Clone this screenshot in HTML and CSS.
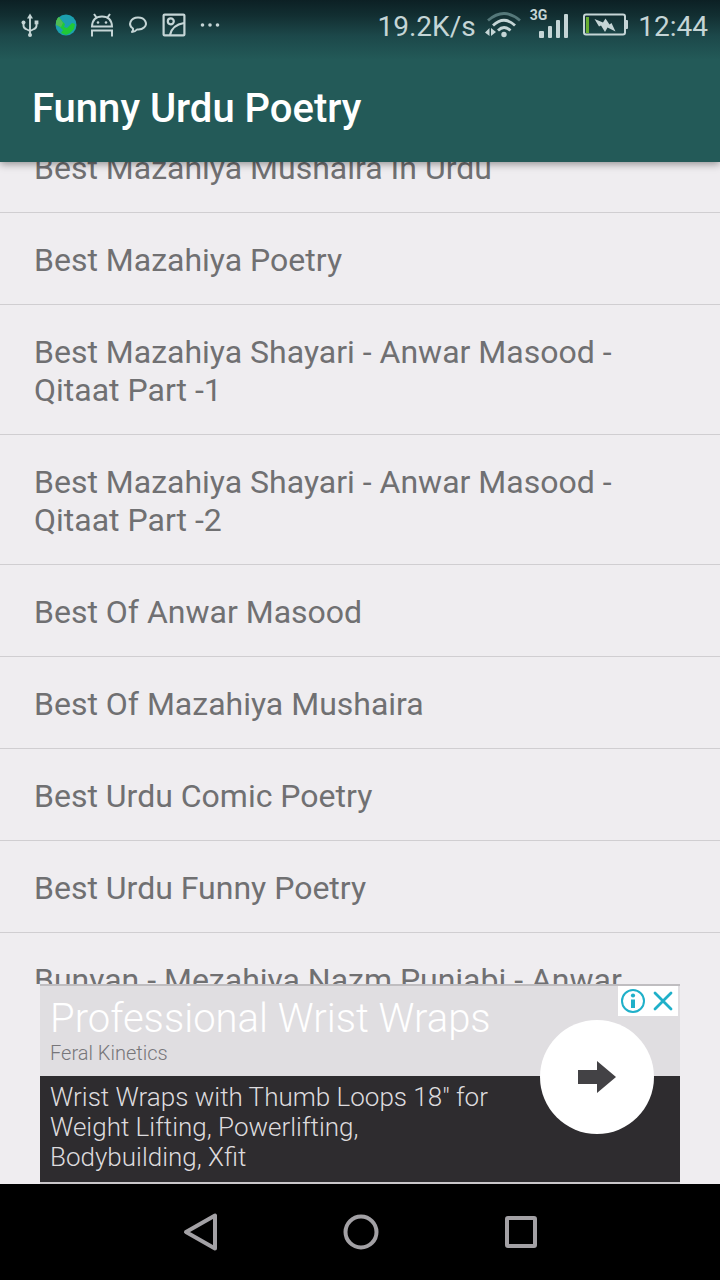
FILE: index.html
```html
<!DOCTYPE html>
<html lang="en">
<head>
<meta charset="utf-8">
<meta name="viewport" content="width=device-width, initial-scale=1">
<title>Funny Urdu Poetry</title>
<link rel="stylesheet" href="styles.css">
</head>
<body>
<div class="screen">
  <header class="header">
    <div class="status">
      <div class="status-left">
        <svg class="note-icon" viewBox="0 0 24 24" fill="none" stroke="#c5d5d6" stroke-width="1.900"><path d="M12 3v18M5.500 10v2.500q0 2.500 2.500 3.500l4 2M18.500 9v3.500q0 2.500-2.500 3.500l-4 2"/><path d="M12 .5l3 5H9z" fill="#c5d5d6" stroke="none"/><circle cx="12" cy="22" r="2" fill="#c5d5d6" stroke="none"/><circle cx="5.500" cy="9.500" r="2" fill="#c5d5d6" stroke="none"/><path d="M16.600 7.500h3.800v3.800h-3.800z" fill="#c5d5d6" stroke="none"/></svg>
        <svg class="note-icon" viewBox="0 0 24 24"><circle cx="12" cy="12" r="10.500" fill="#1c9fb0"/><path d="M2 9Q3 5 5 4l3 4 3 3-1 3 3 1 5-5 3 1-1 5-4 4-4 2-5-2 2-3-3-3-3-2z" fill="#20c936"/><path d="M2 9Q3 5 5 4l4 6-2 4-5-2z" fill="#4fbb55"/></svg>
        <svg class="note-icon" viewBox="0 0 24 24" fill="none" stroke="#c5d5d6" stroke-width="2"><path d="M2 13.500Q2.500 3.500 12 3.500T22 13.500zM6.500 4.500L4 1M17.500 4.500L20 1M2 23.500v-6h20v6"/><circle cx="8" cy="9.500" r="1.300" fill="#c5d5d6" stroke="none"/><circle cx="16" cy="9.500" r="1.300" fill="#c5d5d6" stroke="none"/></svg>
        <svg class="note-icon" viewBox="0 0 24 24" fill="none" stroke="#c5d5d6" stroke-width="2" stroke-linejoin="round"><path d="M7 15.500C1.500 12 4.500 4.500 12 4.500S22 11 18 14.500Q15.500 17 11 16.500 9 19 6 19 7.500 17.500 7 15.500z"/></svg>
        <svg class="note-icon" viewBox="0 0 24 24" fill="none" stroke="#c5d5d6" stroke-width="2.200"><rect x="1.600" y="1.600" width="20.800" height="20.800" rx="1"/><circle cx="8.800" cy="8.300" r="3"/><path d="M8 22Q10 12 22 10"/></svg>
        <svg class="note-icon" viewBox="0 0 24 24" fill="#c5d5d6"><circle cx="4.500" cy="12" r="1.800"/><circle cx="12" cy="12" r="1.800"/><circle cx="19.500" cy="12" r="1.800"/></svg>
      </div>
      <div class="status-right">
        <span class="status-text">19.2K/s</span>
        <svg class="wifi" viewBox="0 0 36 28" fill="none" stroke="#c5d5d6" stroke-width="2.800"><path d="M3 9.500Q19 -4.500 35 9.500" stroke="#55787a"/><path d="M8 14.500Q19 4 30 14.500"/><path d="M13 19.500Q19 13.500 25.500 19.500"/><circle cx="19" cy="23.500" r="2.700" fill="#c5d5d6" stroke="none"/><path d="M4.500 17v8L0 21.500zM6 17l5 4-5 4z" fill="#c5d5d6" stroke="none"/></svg>
        <span class="signal"><span class="network">3G</span><svg class="bars" viewBox="0 0 30 26" fill="#c5d5d6"><rect y="17" width="5" height="7" rx="1"/><rect x="9" y="12" width="4" height="12" rx="1"/><rect x="17" y="6" width="4" height="18" rx="1"/><rect x="25" width="4" height="24" rx="1"/></svg></span>
        <svg class="battery" viewBox="0 0 46 24"><rect x="1" y="1.500" width="41" height="20" rx="2" fill="none" stroke="#c5d5d6" stroke-width="2"/><path d="M43 7h1q1 0 1 1v7q0 1-1 1h-1z" fill="#c5d5d6"/><path d="M3 4h3v16H3z" fill="#68ad32"/><path d="M11.500 6l8.500 3.500L22.500 5.500 26.500 11.500 28.500 10l4 8.500-8-4L22 19l-4-6.500-2 1z" fill="#c5d5d6"/></svg>
        <time class="status-text">12:44</time>
      </div>
    </div>
    <h1 class="title">Funny Urdu Poetry</h1>
  </header>
  <main class="content">
    <ul class="list">
      <li class="item">Best Mazahiya Mushaira In Urdu</li>
      <li class="item">Best Mazahiya Poetry</li>
      <li class="item">Best Mazahiya Shayari - Anwar Masood - Qitaat Part -1</li>
      <li class="item">Best Mazahiya Shayari - Anwar Masood - Qitaat Part -2</li>
      <li class="item">Best Of Anwar Masood</li>
      <li class="item">Best Of Mazahiya Mushaira</li>
      <li class="item">Best Urdu Comic Poetry</li>
      <li class="item">Best Urdu Funny Poetry</li>
      <li class="item">Bunyan - Mezahiya Nazm Punjabi - Anwar</li>
    </ul>
  </main>
  <aside class="ad">
    <div class="ad-head">
      <h2 class="ad-title">Professional Wrist Wraps</h2>
      <p class="ad-brand">Feral Kinetics</p>
    </div>
    <div class="ad-body"><p class="ad-text">Wrist Wraps with Thumb Loops 18" for Weight Lifting, Powerlifting, Bodybuilding, Xfit</p></div>
    <div class="ad-choices">
      <button class="ad-button" aria-label="Ad information"><svg viewBox="0 0 24 24" width="24" height="24" fill="none" stroke="#1fb0c9" stroke-width="2"><circle cx="12" cy="12" r="11"/><path d="M12 10.500V19" stroke-width="4"/><circle cx="12" cy="6.500" r="2.100" fill="#1fb0c9" stroke="none"/></svg></button>
      <button class="ad-button" aria-label="Close ad"><svg viewBox="0 0 24 24" width="24" height="24" fill="none" stroke="#1fb0c9" stroke-width="2.800" stroke-linecap="round"><path d="M4 4l16 16M20 4L4 20"/></svg></button>
    </div>
    <button class="ad-go" aria-label="Open ad"><svg viewBox="0 0 38 34" width="38" height="34"><path d="M0 10h19V1l19 16-19 16v-9H0z" fill="#434245"/></svg></button>
  </aside>
  <nav class="nav">
    <button class="nav-button" aria-label="Back"><svg viewBox="0 0 40 40" width="40" height="40"><path d="M35 3.500v33L6 20z"/></svg></button>
    <button class="nav-button" aria-label="Home"><svg viewBox="0 0 40 40" width="40" height="40"><circle cx="21" cy="20" r="15.500"/></svg></button>
    <button class="nav-button" aria-label="Recent apps"><svg viewBox="0 0 40 40" width="40" height="40"><rect x="7" y="6" width="28" height="28" rx="1"/></svg></button>
  </nav>
</div>
</body>
</html>
```

FILE: styles.css
```css
* {
  box-sizing: border-box;
}

body,
h1,
h2,
p,
ul {
  margin: 0;
  padding: 0;
}

body {
  font-family: Roboto, "Noto Sans", sans-serif;
  background: #efedf0;
}

button {
  display: flex;
  align-items: center;
  justify-content: center;
  padding: 0;
  border: 0;
  background: none;
}

svg {
  display: block;
}

.screen {
  display: flex;
  flex-direction: column;
  height: 100vh;
}

.header {
  position: relative;
  z-index: 1;
  background: linear-gradient(#0c2024 0, #122f32 16px, #1c484a 36px, #235a58 60px);
  box-shadow: 0 2px 8px rgba(0, 0, 0, 0.4);
}

.status {
  display: flex;
  align-items: center;
  justify-content: space-between;
  height: 50px;
  padding: 0 12px 0 18px;
  color: #c5d5d6;
}

.status-left {
  display: flex;
  gap: 12px;
}

.note-icon {
  width: 24px;
  height: 24px;
}

.status-right {
  display: flex;
  align-items: center;
  gap: 9px;
}

.status-text {
  padding-top: 4px;
  font-size: 28px;
  line-height: 32px;
}

.wifi {
  width: 36px;
  height: 28px;
}

.signal {
  display: flex;
  align-items: flex-start;
  height: 36px;
}

.network {
  font-size: 14px;
  font-weight: 700;
  line-height: 16px;
}

.bars {
  width: 30px;
  height: 26px;
  margin: 7px 5px 0 -8px;
}

.battery {
  width: 46px;
  height: 24px;
}

.title {
  padding: 35px 32px 29px;
  font-size: 40px;
  font-weight: 500;
  line-height: 48px;
  color: #fff;
}

.content {
  flex: 1;
  min-height: 0;
  overflow: hidden;
}

.list {
  margin-top: -41px;
  list-style: none;
}

.item {
  padding: 28px 34px 25px;
  border-bottom: 1px solid #d0ced1;
  font-size: 32px;
  line-height: 38px;
  color: #707072;
}

.ad {
  position: relative;
  margin: 0 40px;
  border-top: 2px solid #bfbdc0;
  border-bottom: 2px solid #c9c7ca;
  font-weight: 300;
}

.ad-head {
  height: 90px;
  padding: 9px 10px;
  background: #e0dee1;
}

.ad-title {
  font-size: 40px;
  font-weight: 300;
  line-height: 48px;
  color: #fff;
}

.ad-brand {
  font-size: 20px;
  line-height: 20px;
  color: #77767a;
}

.ad-body {
  padding: 6px 140px 10px 10px;
  background: #2e2c2f;
}

.ad-text {
  max-width: 460px;
  font-size: 26px;
  line-height: 30px;
  color: #dddbde;
}

.ad-choices {
  position: absolute;
  top: 0;
  right: 2px;
  display: flex;
  background: #fff;
}

.ad-button {
  width: 30px;
  height: 30px;
}

.ad-go {
  position: absolute;
  top: 34px;
  right: 26px;
  width: 114px;
  height: 114px;
  border-radius: 50%;
  background: #fff;
}

.nav {
  display: flex;
  justify-content: center;
  height: 96px;
  background: #000;
}

.nav-button {
  width: 160px;
  fill: none;
  stroke: #a3a1a5;
  stroke-width: 4;
  stroke-linejoin: round;
}
```
